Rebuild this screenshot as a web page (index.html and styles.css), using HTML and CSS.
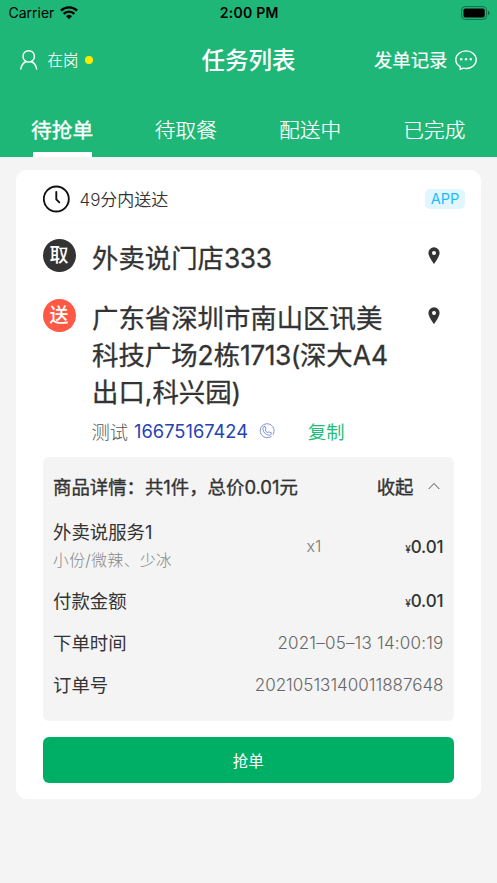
FILE: index.html
```html
<!DOCTYPE html>
<html lang="zh-CN">
<head>
<meta charset="utf-8">
<title>任务列表</title>
<link rel="stylesheet" href="styles.css">
</head>
<body>
<header class="header">
  <div class="status">
    <div class="status-left"><span class="carrier">Carrier</span>
      <svg class="wifi" width="18" height="14" viewBox="0 0 18 14" fill="none" stroke="#000" stroke-width="2.4"><path d="M.9 4.700a11.600 11.600 0 0 1 16.200 0M3.700 7.900a7.400 7.400 0 0 1 10.600 0"/><path d="M9 13.200 6.100 10.300a4.100 4.100 0 0 1 5.800 0z" fill="#000" stroke="none"/></svg>
    </div>
    <span class="clock">2:00 PM</span>
    <svg class="battery" width="29" height="14" viewBox="0 0 29 14"><rect x=".6" y=".6" width="25" height="12.8" rx="3.6" fill="none" stroke="#0f7046" stroke-width="1"/><rect x="2.5" y="2.5" width="21.2" height="9" rx="1.8"/><path d="M27.2 4.8c1.800.7 1.800 3.700 0 4.400z" fill="#0b5334"/></svg>
  </div>
  <div class="nav">
    <div class="duty">
      <svg width="18" height="20" viewBox="0 0 18 20" fill="none" stroke="#fff" stroke-width="1.4" stroke-linecap="round"><circle cx="8.700" cy="6.400" r="5.700"/><path d="M.8 19c.5-3.500 2.500-6.200 5.300-7.500M11.300 11.500c2.800 1.300 4.800 4 5.300 7.500"/></svg>
      <span>在岗</span><i class="dot"></i>
    </div>
    <h1 class="title">任务列表</h1>
    <div class="records"><span>发单记录</span>
      <svg width="22" height="20" viewBox="0 0 22 20" fill="none" stroke="#fff" stroke-width="1.400" stroke-linejoin="round"><path d="M5.200 16.600C2.500 15.200.8 12.700.8 9.700.8 4.800 5.300.9 11 .9s10.200 3.900 10.200 8.800-4.500 8.800-10.200 8.800c-1 0-2-.1-2.900-.4L5.200 19.400z"/><g fill="#fff" stroke="none"><circle cx="6.200" cy="9.300" r="1.200"/><circle cx="11" cy="9.300" r="1.200"/><circle cx="15.800" cy="9.300" r="1.200"/></g></svg>
    </div>
  </div>
  <nav class="tabs">
    <a class="tab active">待抢单</a><a class="tab">待取餐</a><a class="tab">配送中</a><a class="tab">已完成</a>
  </nav>
</header>
<main class="card">
  <div class="eta">
    <svg width="27" height="28" viewBox="0 0 27 28" fill="none" stroke="#111" stroke-width="1.900"><circle cx="13.300" cy="14" r="12.500"/><path d="M13.300 7V14.300L16.300 17.400" stroke-linecap="round" stroke-linejoin="round"/></svg>
    <span class="eta-text">49分内送达</span><span class="tag">APP</span>
  </div>
  <div class="place">
    <span class="badge pick">取</span>
    <div class="address">外卖说门店<span class="digits">333</span></div>
    <svg class="pin" width="12" height="18" viewBox="0 0 12 18"><path fill="#333" fill-rule="evenodd" d="M6 .3a5.600 5.600 0 0 0-5.600 5.600C.4 9.600 6 17 6 17s5.600-7.400 5.600-11.100A5.600 5.600 0 0 0 6 .3zM6 3.900a2 2 0 1 1 0 4 2 2 0 0 1 0-4z"/></svg>
  </div>
  <div class="place drop">
    <span class="badge send">送</span>
    <div class="address">广东省深圳市南山区讯美<br>科技广场2栋<span class="tight">1713(</span>深大A4<br>出口,科兴园)</div>
    <svg class="pin" width="12" height="18" viewBox="0 0 12 18"><path fill="#333" fill-rule="evenodd" d="M6 .3a5.600 5.600 0 0 0-5.600 5.600C.4 9.600 6 17 6 17s5.600-7.400 5.600-11.100A5.600 5.600 0 0 0 6 .3zM6 3.900a2 2 0 1 1 0 4 2 2 0 0 1 0-4z"/></svg>
  </div>
  <div class="contact">
    <span>测试</span><span class="phone">16675167424</span>
    <svg width="16" height="16" viewBox="0 0 16 16" fill="none" stroke="#6f84cf" stroke-width=".9" stroke-linecap="round" stroke-linejoin="round"><path d="M12.200 13.500a7 7 0 1 1 1.900-2"/><path d="M5.200 3.600 6.500 3.900 7 6.200 6.100 7c.5 1.300 1.400 2.200 2.700 2.700L9.700 8.900l2.500.7.100 1.400c-.6 1-1.600 1.400-2.700 1.200C6.700 11.700 4.400 9.400 3.900 6.500c-.1-1.200.3-2.200 1.300-2.900z"/></svg>
    <a class="copy">复制</a>
  </div>
  <section class="details">
    <div class="row head"><span>商品详情：共1件，总价0.01元</span><span class="fold">收起<svg width="12" height="8" viewBox="0 0 12 8" fill="none" stroke="#555" stroke-width="1"><path d="M.7 7 6 1.500 11.300 7"/></svg></span></div>
    <div class="item">
      <div class="goods"><div class="name">外卖说服务1</div><div class="spec">小份/微辣、少冰</div></div>
      <span class="qty">x1</span><span class="price"><small>¥</small>0.01</span>
    </div>
    <div class="row"><span>付款金额</span><span class="price"><small>¥</small>0.01</span></div>
    <div class="row"><span>下单时间</span><span class="value">2021–05–13 14:00:19</span></div>
    <div class="row"><span>订单号</span><span class="value order">20210513140011887648</span></div>
  </section>
  <button class="grab">抢单</button>
</main>
</body>
</html>
```
FILE: styles.css
```css
* { box-sizing: border-box; }
body {
  margin: 0;
  min-height: 883px;
  background: #f4f4f4;
  color: #333;
  font-family: Inter, "Noto Sans CJK SC", sans-serif;
  white-space: nowrap;
}
svg { display: block; flex: none; }
.header { height: 156.5px; background: #1fb777; color: #fff; }
.status {
  height: 25px;
  padding: 0 7px 0 8.500px;
  display: grid;
  grid-template-columns: 1fr auto 1fr;
  align-items: center;
  color: #000;
  font-size: 14px;
}
.status-left { display: flex; align-items: center; gap: 6px; }
.clock { font-weight: 600; font-size: 14px; letter-spacing: .25px; }
.battery { justify-self: end; }
.nav {
  height: 69px;
  padding: 0 20px;
  display: grid;
  grid-template-columns: 1fr auto 1fr;
  align-items: center;
}
.duty { display: flex; align-items: center; font-size: 15.400px; font-weight: 300; -webkit-text-stroke: .15px; }
.duty span { margin: -2px 0 0 9.500px; }
.dot { width: 8px; height: 8px; margin-left: 7px; border-radius: 50%; background: #ffeb00; }
.title { margin: -2px 0 0; font-size: 23.500px; font-weight: 500; }
.records { justify-self: end; display: flex; align-items: center; gap: 7.500px; font-size: 18.400px; -webkit-text-stroke: .2px; }
.records span { margin-top: -2px; }
.tabs { height: 62.500px; display: grid; grid-template-columns: repeat(4, 1fr); }
.tab {
  display: flex;
  flex-direction: column;
  align-items: center;
  padding-right: 1px;
  font-size: 20.700px;
  font-weight: 300;
  line-height: 73px;
  height: 62.500px;
  -webkit-text-stroke: .2px;
}
.active { padding-right: 0; font-weight: 400; -webkit-text-stroke: .35px; }
.active::after { content: ""; width: 59px; height: 4.500px; margin-top: -15px; background: #fff; }
.card {
  width: 465px;
  height: 629px;
  margin: 13.500px 0 0 16px;
  padding: 0 27px 0 26.500px;
  border-radius: 11px;
  background: #fff;
}
.eta { height: 53px; padding-top: 5px; display: flex; align-items: center; margin-right: -11px; border-bottom: 1px solid #fcfcfc; }
.eta-text { margin: -1px 0 0 10px; font-size: 17px; font-weight: 350; letter-spacing: -.05px; }
.tag {
  margin-left: auto;
  width: 40px;
  height: 20px;
  border-radius: 5px;
  background: #e2f6ff;
  color: #1dbcff;
  font-size: 14.500px;
  line-height: 20px;
  text-align: center;
}
.place { display: grid; grid-template-columns: 49.500px 1fr 26px; align-items: start; margin-top: 16px; }
.badge {
  width: 33px;
  height: 33px;
  border-radius: 50%;
  color: #fff;
  font-size: 19px;
  font-weight: 500;
  line-height: 34px;
  text-align: center;
}
.pick { background: #333; }
.send { background: #ff5945; }
.address {
  padding-top: 1px;
  margin-bottom: -1px;
  font-size: 26.400px;
  line-height: 37px;
  -webkit-text-stroke: .3px;
}
.digits { letter-spacing: -.4px; }
.tight { letter-spacing: -.5px; }
.pin { margin-top: 7.500px; }
.drop { margin-top: 23px; }
.contact { height: 40px; padding: 2px 0 0 49px; display: flex; align-items: center; font-size: 18.300px; color: #555; font-weight: 300; }
.phone { margin: 0 11px 0 6px; color: #2741b5; font-weight: 400; }
.copy { margin-left: 33px; color: #1fbd79; font-weight: 400; }
.details { height: 264px; margin-top: 7px; padding: 8px 10.500px; border-radius: 6px; background: #f4f4f4; font-size: 18.400px; }
.row { height: 42px; display: flex; justify-content: space-between; align-items: center; }
.head { -webkit-text-stroke: .35px; }
.fold { display: flex; align-items: center; gap: 14px; margin-right: 4px; }
.item { display: grid; grid-template-columns: 1fr 124px 70px; align-items: center; height: 72px; padding-top: 6px; }
.name { line-height: 30px; }
.spec { font-size: 15.700px; line-height: 28px; color: #888; font-weight: 300; letter-spacing: .5px; }
.qty { padding-left: 57px; font-size: 16px; font-weight: 350; color: #777; }
.price { padding-top: 1px; text-align: right; font-size: 17px; font-weight: 500; letter-spacing: -.1px; }
.price small { font-size: 10px; }
.value { padding-top: 1px; font-size: 17px; font-weight: 350; color: #666; letter-spacing: .2px; }
.order { letter-spacing: 0; }
.grab {
  display: block;
  width: 100%;
  height: 46px;
  margin-top: 16px;
  padding: 0;
  border: 0;
  border-radius: 6px;
  background: #00af66;
  color: #fff;
  font: 400 15.500px/46px "Noto Sans CJK SC", sans-serif;
}
```
